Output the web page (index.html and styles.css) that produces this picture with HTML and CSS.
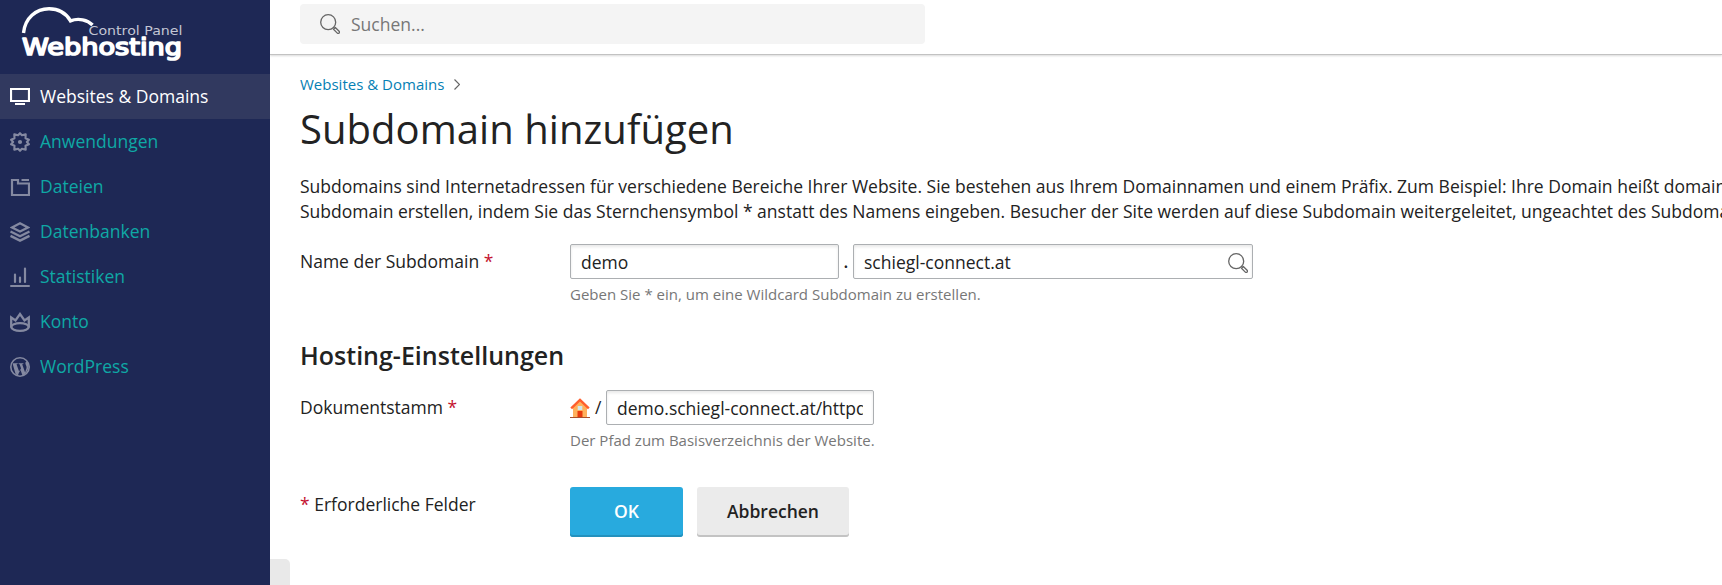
FILE: index.html
```html
<!DOCTYPE html>
<html lang="de">
<head>
<meta charset="utf-8">
<title>Subdomain hinzufügen</title>
<link rel="stylesheet" href="styles.css">
</head>
<body>
<svg class="sprite" aria-hidden="true">
  <symbol id="search" viewBox="0 0 20 20">
    <g fill="none" stroke="currentColor" stroke-width="1.3">
      <circle cx="8.2" cy="8.2" r="7.5"/>
      <path d="M13.400 13.400l1.200 1.200M13.500 15.300l1.800-1.800 3.800 3.800a1.200 1.200 0 0 1-1.800 1.800z" stroke-linejoin="round"/>
    </g>
  </symbol>
</svg>
<div class="app">
  <aside class="sidebar">
    <a class="logo" href="#">
      <svg width="165" height="60" viewBox="0 0 165 60">
        <path d="M3.5 30C5 15 16 5.800 29 5.800c9 0 17 4.500 21.500 12 8-3 17-1 22 4.200" fill="none" stroke="#fff" stroke-width="3.400"/>
        <text class="logo-small" x="68.500" y="31.800" textLength="94" lengthAdjust="spacingAndGlyphs">Control Panel</text>
        <text class="logo-big" x="2" y="52" textLength="160" lengthAdjust="spacingAndGlyphs">Webhosting</text>
      </svg>
    </a>
    <nav class="menu">
      <a class="item active" href="#"><svg class="ico" viewBox="0 0 20 20"><path d="M1 2h18v12H1z" fill="none" stroke="currentColor" stroke-width="2.200"/><path d="M5 16h10v2H5z" fill="currentColor"/></svg>Websites &amp; Domains</a>
      <a class="item" href="#"><svg class="ico" viewBox="0 0 20 20"><path d="M10 1.200l1.900 2.100 3.800-1-.2 3.900 3.400 1.500-2 2.300 2 2.300-3.400 1.500.2 3.900-3.800-1-1.900 2.100-1.900-2.100-3.800 1 .2-3.900-3.400-1.500 2-2.300-2-2.300 3.400-1.500-.2-3.900 3.800 1z" fill="none" stroke="currentColor" stroke-width="2.100" stroke-linejoin="round"/><circle cx="10" cy="10" r="2.100" fill="currentColor"/></svg>Anwendungen</a>
      <a class="item" href="#"><svg class="ico" viewBox="0 0 20 20"><path d="M2 3h6v3.500h11V18H2z" fill="none" stroke="currentColor" stroke-width="2.200"/><path d="M11.500 2H19v2h-7.500z" fill="currentColor"/></svg>Dateien</a>
      <a class="item" href="#"><svg class="ico" viewBox="0 0 20 20"><g fill="none" stroke="currentColor" stroke-width="2.300"><path d="M10 1.300l8 4.100-8 4.100-8-4.100z"/><path d="M.5 9.500l9.500 4.700 9.500-4.700M.5 13.900l9.500 4.700 9.500-4.700"/></g></svg>Datenbanken</a>
      <a class="item" href="#"><svg class="ico" viewBox="0 0 20 20"><path d="M1 19h18" stroke="currentColor" stroke-width="2" stroke-linecap="round"/><path d="M5 7.500v7.500M10 10.500v4.500M15 1.500v13.500" fill="none" stroke="currentColor" stroke-width="2.200" stroke-linecap="round"/></svg>Statistiken</a>
      <a class="item" href="#"><svg class="ico" viewBox="0 0 20 20"><g fill="none" stroke="currentColor" stroke-width="2.300"><path d="M1.200 15.500V5.500l4.300 3L10 2l4.500 6.500 4.300-3v10"/><ellipse cx="10" cy="15" rx="8.700" ry="3.800"/></g></svg>Konto</a>
      <a class="item" href="#"><svg class="ico" viewBox="0 0 20 20"><circle cx="10" cy="10" r="9.200" fill="none" stroke="currentColor" stroke-width="1.600"/><path d="M2.700 6.200h5v.8l-1.200.2 3 8.200 1.500-4.200-1.400-4-1-.2v-.8h4.800v.8l-1.200.2 2.900 8.200 1.300-4c.8-2.400-1-3.500-1-5 0-1.200.8-2 1.700-2.100l1.400 3.200c.4 2-.2 3.500-.8 5.200L15 17.500l-2.500 1-2.300-6.300-2.200 6-2.300-.6L2.700 7z" fill="currentColor"/></svg>WordPress</a>
    </nav>
  </aside>
  <div class="page">
    <header class="topbar">
      <div class="searchbox"><svg class="mag" width="20" height="20"><use href="#search"/></svg><span>Suchen...</span></div>
    </header>
    <main class="content">
      <div class="crumbs"><a href="#">Websites &amp; Domains</a><svg width="6" height="11" viewBox="0 0 6 11"><path d="M.5.500l5 5-5 5" fill="none" stroke="#666" stroke-width="1.200"/></svg></div>
      <h1>Subdomain hinzufügen</h1>
      <p class="intro">Subdomains sind Internetadressen für verschiedene Bereiche Ihrer Website. Sie bestehen aus Ihrem Domainnamen und einem Präfix. Zum Beispiel: Ihre Domain heißt domain<br>Subdomain erstellen, indem Sie das Sternchensymbol * anstatt des Namens eingeben. Besucher der Site werden auf diese Subdomain weitergeleitet, ungeachtet des Subdomai</p>
      <div class="row">
        <div class="label">Name der Subdomain <b>*</b></div>
        <div>
          <div class="controls">
            <div class="field w-name">demo</div><span class="dot">.</span>
            <div class="field w-domain"><span>schiegl-connect.at</span><svg class="mag" width="20" height="20"><use href="#search"/></svg></div>
          </div>
          <div class="hint">Geben Sie * ein, um eine Wildcard Subdomain zu erstellen.</div>
        </div>
      </div>
      <h2>Hosting-Einstellungen</h2>
      <div class="row">
        <div class="label">Dokumentstamm <b>*</b></div>
        <div>
          <div class="controls">
            <svg class="home" width="20" height="20" viewBox="0 0 20 20"><path d="M3 8.500L10 2l7 6.500V19H3z" fill="#ffb15c"/><path d="M7.500 13h5v6h-5z" fill="#e8390c"/><path d="M7.700 8h4.600v4H7.700z" fill="#cfe8ee"/><path d="M1.200 10.300L10 1.800l8.800 8.500" fill="none" stroke="#ff5f2e" stroke-width="2.400"/><path d="M0 19h20v1H0z" fill="#a8502a"/></svg>
            <span class="slash">/</span>
            <div class="field w-root"><span class="clip">demo.schiegl-connect.at/httpdocs</span></div>
          </div>
          <div class="hint">Der Pfad zum Basisverzeichnis der Website.</div>
        </div>
      </div>
      <div class="row actions">
        <div class="label"><b>*</b> Erforderliche Felder</div>
        <div class="buttons"><button class="btn ok">OK</button><button class="btn cancel">Abbrechen</button></div>
      </div>
    </main>
    <div class="handle"></div>
  </div>
</div>
</body>
</html>
```

FILE: styles.css
```css
* { box-sizing: border-box; }
body { margin: 0; overflow: hidden; background: #fff; color: #222; font: 17.5px/25px "Open Sans", sans-serif; letter-spacing: .006px; }
a { text-decoration: none; }
.sprite { position: absolute; width: 0; height: 0; }
.app { display: flex; height: 585px; }
.sidebar { width: 270px; flex: none; background: #1e2855; }
.logo { display: block; height: 74px; padding: 3px 0 0 20px; }
.logo svg { display: block; }
.logo-small { font: 13px "DejaVu Sans", sans-serif; fill: #c3c6d4; }
.logo-big { font: 400 23.5px "DejaVu Sans", sans-serif; fill: #fff; stroke: #fff; stroke-width: 1.7px; stroke-linejoin: round; }
.item { display: flex; align-items: center; gap: 10px; height: 45px; padding-left: 10px; color: #0fa8a5; }
.item.active { background: #31395f; color: #fff; }
.ico { width: 20px; height: 20px; color: #8489a1; }
.active .ico { color: #fff; }
.page { position: relative; flex: 1; min-width: 0; overflow: hidden; }
.topbar { height: 55px; padding: 4px 30px 0; border-bottom: 1px solid #c2c2c2; box-shadow: 0 1px 2px rgba(0,0,0,.15); }
.searchbox { display: flex; align-items: center; gap: 11px; width: 625px; height: 40px; padding-left: 20px; border-radius: 4px; background: #f4f4f4; color: #777; }
.mag { color: #666; flex: none; }
.content { padding: 17px 0 0 30px; }
.crumbs { display: flex; align-items: center; gap: 10px; height: 25px; font-size: 15px; }
.crumbs a { color: #0580b4; }
h1 { margin: 7px 0 0; font-size: 40px; line-height: 50px; font-weight: 400; letter-spacing: .05px; }
.intro { margin: 20px 0 0; white-space: nowrap; }
.row { display: grid; grid-template-columns: 270px auto; justify-content: start; margin-top: 20px; }
.label { padding-top: 5px; }
.label b { color: #c4122f; font-weight: 400; }
.controls { display: flex; align-items: center; }
.field { display: flex; align-items: center; justify-content: space-between; height: 35px; padding: 2px 10px 0; border: 1px solid #acafb2; border-radius: 2px; background: #fff; box-shadow: inset 0 2px 3px rgba(0,0,0,.09); }
.w-name { width: 269px; }
.w-domain { width: 400px; padding-right: 4px; }
.w-root { width: 268px; }
.clip { overflow: hidden; white-space: nowrap; }
.dot { width: 14px; text-align: center; font-weight: 600; }
.slash { width: 16px; padding-left: 5px; }
.hint { margin-top: 3px; font-size: 15px; color: #777; }
h2 { margin: 33px 0 0; font-size: 25px; line-height: 30px; font-weight: 600; }
.actions { margin-top: 34px; }
.buttons { display: flex; gap: 14px; }
.btn { height: 50px; padding: 0 0 1px; border: 0; border-radius: 3px; font: 600 17.5px/25px "Open Sans", sans-serif; }
.ok { width: 113px; background: #28aade; color: #fff; box-shadow: inset 0 -2px #2391bd; }
.cancel { width: 152px; background: #ebebeb; color: #222; box-shadow: inset 0 -2px #c3c3c3; }
.handle { position: absolute; left: 0; bottom: 0; width: 20px; height: 26px; border-radius: 0 5px 0 0; background: #e9e9e9; }
```
